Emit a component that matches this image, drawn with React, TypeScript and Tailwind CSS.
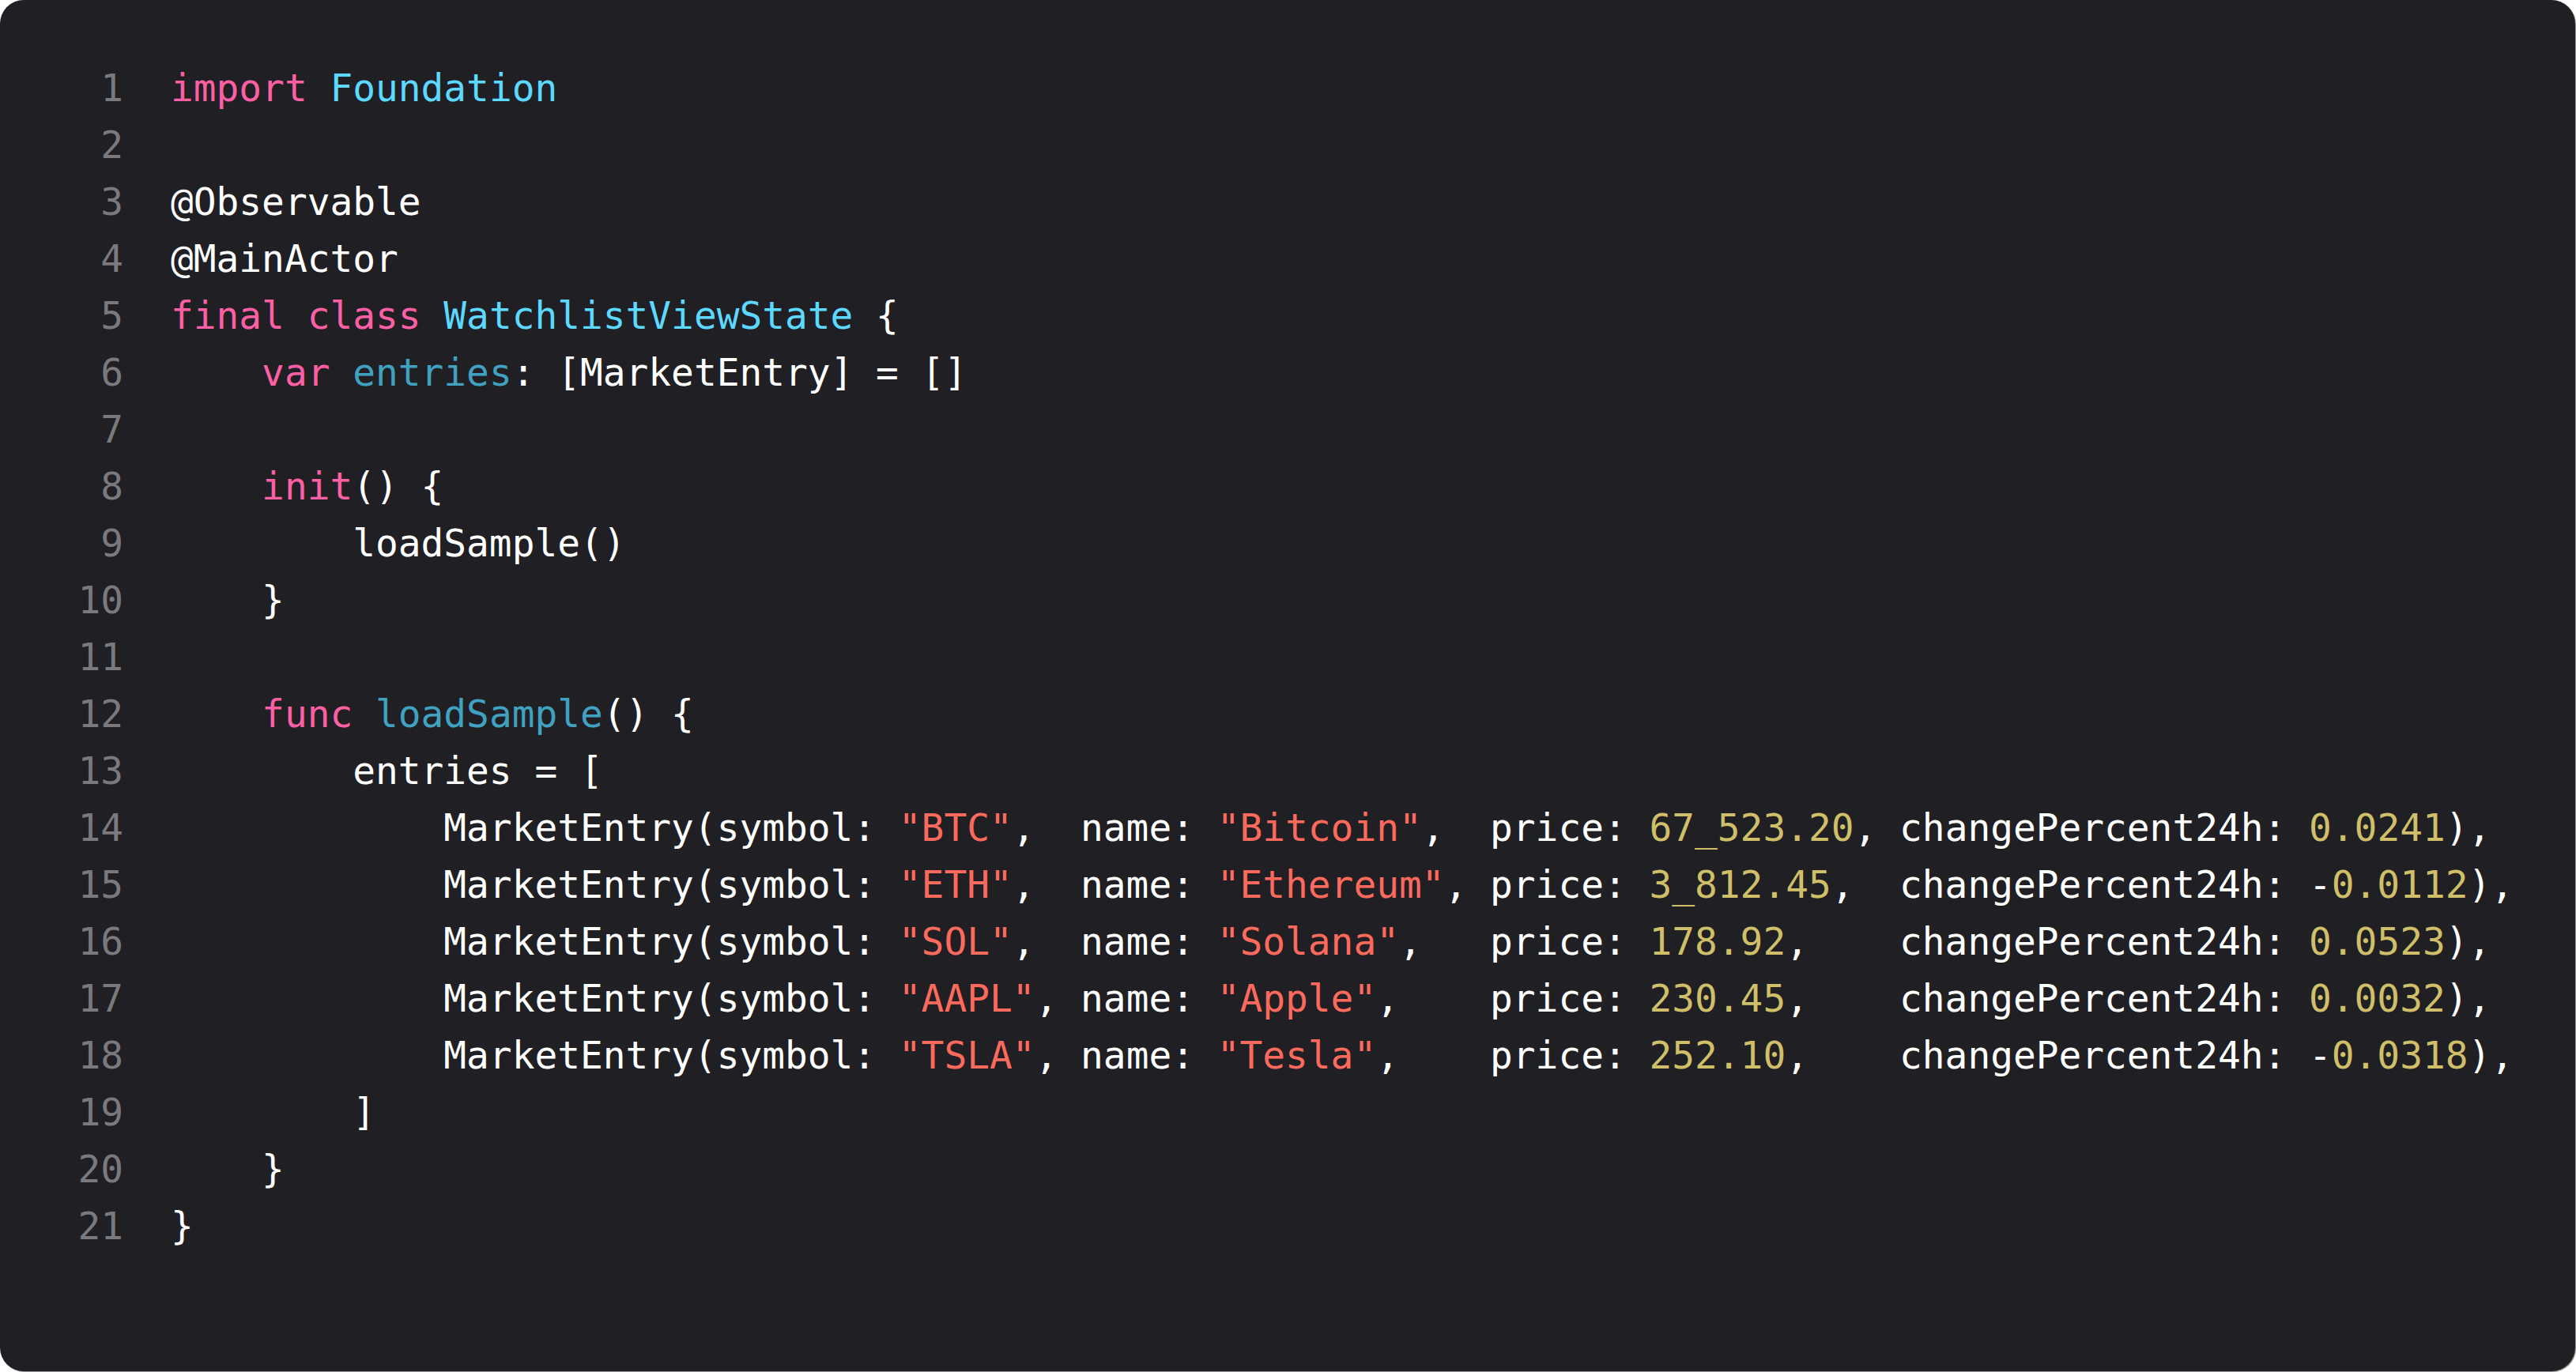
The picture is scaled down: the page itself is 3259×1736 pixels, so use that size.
import React from "react";

type Tok = [string, string];

const K = "text-[#fc5fa3]"; // keyword
const T = "text-[#5dd8ff]"; // type decl
const D = "text-[#41a1c0]"; // other decl
const S = "text-[#fc6a5d]"; // string
const N = "text-[#d0bf69]"; // number
const P = "text-[#ffffff]"; // plain

function entry(sym: string, name: string, price: string, change: string): Tok[] {
  const neg = change.startsWith("-");
  const toks: Tok[] = [
    ["            MarketEntry(symbol: ", P],
    [`"${sym}"`, S],
    [",", P],
    [" ".repeat(Math.max(1, 8 - (sym.length + 3))) + "name: ", P],
    [`"${name}"`, S],
    [",", P],
    [" ".repeat(Math.max(1, 12 - (name.length + 3))) + "price: ", P],
    [price, N],
    [",", P],
    [" ".repeat(Math.max(1, 11 - (price.length + 1))) + "changePercent24h: ", P],
  ];
  if (neg) {
    toks.push(["-", P]);
    toks.push([change.slice(1), N]);
  } else {
    toks.push([change, N]);
  }
  toks.push(["),", P]);
  return toks;
}

const lines: Tok[][] = [
  [["import", K], [" ", P], ["Foundation", T]],
  [],
  [["@Observable", P]],
  [["@MainActor", P]],
  [["final", K], [" ", P], ["class", K], [" ", P], ["WatchlistViewState", T], [" {", P]],
  [["    ", P], ["var", K], [" ", P], ["entries", D], [": [MarketEntry] = []", P]],
  [],
  [["    ", P], ["init", K], ["() {", P]],
  [["        loadSample()", P]],
  [["    }", P]],
  [],
  [["    ", P], ["func", K], [" ", P], ["loadSample", D], ["() {", P]],
  [["        entries = [", P]],
  entry("BTC", "Bitcoin", "67_523.20", "0.0241"),
  entry("ETH", "Ethereum", "3_812.45", "-0.0112"),
  entry("SOL", "Solana", "178.92", "0.0523"),
  entry("AAPL", "Apple", "230.45", "0.0032"),
  entry("TSLA", "Tesla", "252.10", "-0.0318"),
  [["        ]", P]],
  [["    }", P]],
  [["}", P]],
];

export default function App() {
  return (
    <div className="w-[3259px] h-[1736px] bg-white overflow-hidden">
      <div className="w-[3258px] h-[1735px] bg-[#1f1f24] rounded-[30px] shadow-[1px_1px_1px_rgba(0,0,0,0.45)] pt-[76px]">
        <div
          className="text-[47.8px] leading-[72px] whitespace-pre"
          style={{ fontFamily: '"DejaVu Sans Mono", "Liberation Mono", monospace' }}
        >
          {lines.map((toks, i) => (
            <div key={i} className="flex h-[72px]">
              <div className="w-[156px] text-right text-[#7a7a7e] shrink-0">{i + 1}</div>
              <div className="pl-[60px]">
                {toks.map(([t, c], j) => (
                  <span key={j} className={c}>
                    {t}
                  </span>
                ))}
              </div>
            </div>
          ))}
        </div>
      </div>
    </div>
  );
}
